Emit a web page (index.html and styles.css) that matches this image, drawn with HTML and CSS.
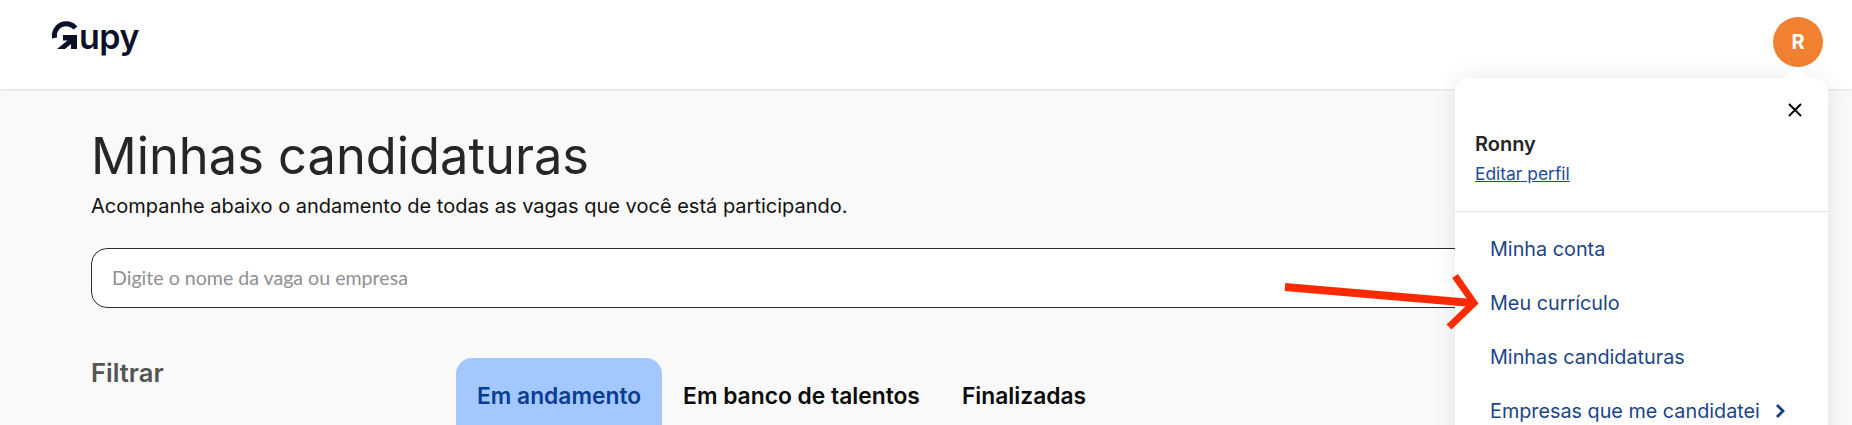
FILE: index.html
```html
<!DOCTYPE html>
<html lang="pt-BR">
<head>
<meta charset="utf-8">
<title>Minhas candidaturas</title>
<link rel="stylesheet" href="styles.css">
</head>
<body>
<header class="topbar">
  <a class="logo" href="#">
    <svg class="logo-mark" viewBox="0 0 28 38" width="28" height="38" aria-hidden="true">
      <path class="logo-arc" d="M3.500 18A12 12 0 0 1 24.500 8"/>
      <path class="logo-arrow" d="M12 15H26V29H20V24L14 29H6L16.500 20.500L12 20.500Z"/>
    </svg>
    <span class="logo-text">upy</span>
  </a>
  <div class="avatar">R</div>
</header>
<main class="content">
  <h1 class="title">Minhas candidaturas</h1>
  <p class="subtitle">Acompanhe abaixo o andamento de todas as vagas que você está participando.</p>
  <div class="search">Digite o nome da vaga ou empresa</div>
  <div class="columns">
    <aside class="filters">Filtrar</aside>
    <nav class="tabs">
      <a class="tab tab-active" href="#">Em andamento</a>
      <a class="tab" href="#">Em banco de talentos</a>
      <a class="tab" href="#">Finalizadas</a>
    </nav>
  </div>
</main>
<div class="panel">
  <span class="panel-notch"></span>
  <div class="panel-head">
    <div class="close-row">
      <svg class="close" viewBox="0 0 14 14" width="14" height="14" aria-hidden="true"><path d="M1 1L13 13M13 1L1 13"/></svg>
    </div>
    <div class="user-name">Ronny</div>
    <a class="edit-link" href="#">Editar perfil</a>
  </div>
  <ul class="menu">
    <li class="menu-item">Minha conta</li>
    <li class="menu-item">Meu currículo</li>
    <li class="menu-item">Minhas candidaturas</li>
    <li class="menu-item">Empresas que me candidatei
      <svg class="chevron" viewBox="0 0 10 14" width="10" height="14" aria-hidden="true"><path d="M2 1L8 7L2 13"/></svg>
    </li>
  </ul>
</div>
<svg class="annotation" viewBox="0 0 200 60" width="200" height="60" aria-hidden="true">
  <path class="annotation-shaft" d="M1 13L188 29"/>
  <path class="annotation-head" d="M171 2L190 29L165 53"/>
</svg>
</body>
</html>
```
FILE: styles.css
```css
* { box-sizing: border-box; }
html, body { margin: 0; height: 425px; overflow: hidden; }
body { background: #f9f9f9; font-family: Inter, "Liberation Sans", sans-serif; color: #252525; position: relative; }

.topbar { height: 89px; background: #fff; box-shadow: 0 1px 2px rgba(0, 0, 0, .1); display: flex; justify-content: space-between; align-items: flex-start; padding: 17px 29px 0 51px; }
.logo { display: flex; align-items: flex-start; text-decoration: none; margin-top: 3px; }
.logo-mark { display: block; flex: none; }
.logo-arc { fill: none; stroke: #0d1029; stroke-width: 5; }
.logo-arrow { fill: #0d1029; }
.logo-text { font-family: Inter, sans-serif; font-weight: 600; font-size: 34px; line-height: 30px; color: #0d1029; letter-spacing: -0.5px; margin: 2px 0 0 0; }
.avatar { width: 50px; height: 50px; border-radius: 50%; background: #f18131; color: #fff; font-weight: 700; font-size: 20px; display: flex; align-items: center; justify-content: center; }

.content { padding: 37px 24px 0 91px; }
.title { margin: 0; font-size: 50.6px; line-height: 60px; font-weight: 400; color: #262626; }
.subtitle { margin: 6px 0 0; font-size: 20px; line-height: 28px; color: #111; }
.search { margin-top: 28px; height: 60px; border: 1px solid #2b2b2b; border-radius: 16px; background: #fff; padding: 0 0 2px 20px; display: flex; align-items: center; font-family: Lato, sans-serif; font-size: 19.6px; color: #8f8f94; }
.columns { display: flex; margin-top: 50px; }
.filters { width: 365px; font-size: 25.6px; line-height: 30px; font-weight: 600; color: #555; }
.tabs { display: flex; }
.tab { height: 78px; padding: 0 21px 4px; border-radius: 16px 16px 0 0; display: flex; align-items: center; font-size: 22.8px; font-weight: 600; color: #0b0b0b; text-decoration: none; white-space: nowrap; }
.tab-active { background: #a3c8ff; color: #0a3c92; }

.panel { position: absolute; top: 78px; left: 1455px; width: 373px; height: 400px; background: #fff; border-radius: 14px 14px 0 0; box-shadow: 0 0 24px rgba(0, 0, 0, .09); }
.panel-notch { position: absolute; top: -11px; left: 329px; width: 0; height: 0; border-left: 13px solid transparent; border-right: 13px solid transparent; border-bottom: 11px solid #fff; }
.panel-head { padding: 16px 17px 25px 20px; border-bottom: 1px solid #e2e2e2; height: 134px; }
.close-row { display: flex; justify-content: flex-end; align-items: center; height: 32px; padding-right: 9px; margin-bottom: 6px; }
.close path { fill: none; stroke: #000; stroke-width: 1.9; }
.user-name { font-size: 20px; line-height: 24px; font-weight: 600; color: #252525; }
.edit-link { display: block; margin-top: 6px; font-size: 17.4px; line-height: 24px; color: #1c4c9c; text-decoration: underline; }
.menu { list-style: none; margin: 0; padding: 10px 0 0 35px; }
.menu-item { height: 54px; display: flex; align-items: center; gap: 15px; font-size: 19.8px; color: #1b4488; white-space: nowrap; }
.chevron path { fill: none; stroke: #163f86; stroke-width: 2.8; }

.annotation { position: absolute; top: 274px; left: 1284px; overflow: visible; }
.annotation-shaft { fill: none; stroke: #fb2a00; stroke-width: 8; }
.annotation-head { fill: none; stroke: #fb2a00; stroke-width: 7; }
```
